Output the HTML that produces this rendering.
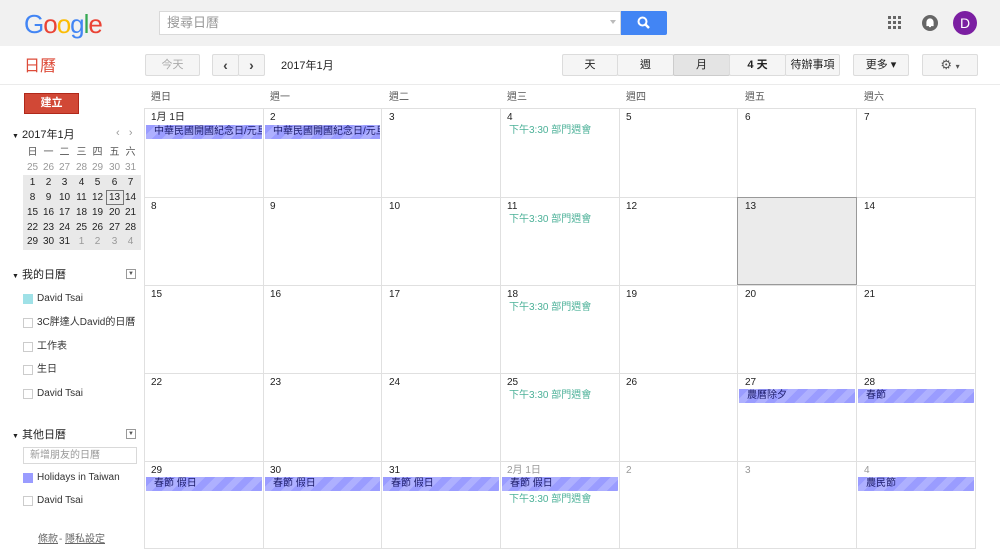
<!DOCTYPE html>
<html><head><meta charset="utf-8"><style>
*{box-sizing:border-box;margin:0;padding:0;line-height:12px}
body{width:1000px;height:549px;overflow:hidden;background:#fff;font-family:"Liberation Sans","Noto Sans CJK TC",sans-serif;font-size:11px;color:#222;position:relative}
.a{position:absolute}
.hdr{left:0;top:0;width:1000px;height:46px;background:#f1f1f1}
.btn{position:absolute;border:1px solid #dcdcdc;background:#f5f5f5;border-radius:2px;text-align:center;font-size:11px;line-height:20px;color:#444}
.vl{position:absolute;top:108px;width:1px;height:441px;background:#e0e0e0}
.hl{position:absolute;left:144px;width:832px;height:1px;background:#e0e0e0}
.dn{position:absolute;font-size:10px;color:#222}
.dh{position:absolute;top:92px;font-size:10px;color:#555}
.ev{position:absolute;height:14px;font-size:10px;line-height:14px;padding-left:8px;color:#1d1d6a;background:repeating-linear-gradient(135deg,#9a9cff 0 7px,#aeb0ff 7px 14px);white-space:nowrap;overflow:hidden}
.tm{position:absolute;font-size:10px;color:#4cb198}
.mc span{position:absolute;width:17px;text-align:center;font-size:10px}
.cb{position:absolute;left:23px;width:10px;height:10px;border:1px solid #ccc}
.cl{position:absolute;left:37px;font-size:10px;color:#333}
</style></head><body>
<div class="a hdr"></div>
<div class="a" style="left:24px;top:10px;font-size:26px;line-height:28px;letter-spacing:-1px;font-family:'Liberation Sans',sans-serif"><span style="color:#4285f4;line-height:28px">G</span><span style="color:#ea4335;line-height:28px">o</span><span style="color:#fbbc05;line-height:28px">o</span><span style="color:#4285f4;line-height:28px">g</span><span style="color:#34a853;line-height:28px">l</span><span style="color:#ea4335;line-height:28px">e</span></div>
<div class="a" style="left:159px;top:11px;width:462px;height:24px;background:#fff;border:1px solid #d9d9d9"></div>
<div class="a" style="left:167px;top:15px;font-size:13px;line-height:15px;color:#999">搜尋日曆</div>
<div class="a" style="left:610px;top:20px;border:3px solid transparent;border-top:4px solid #bbb"></div>
<div class="a" style="left:621px;top:11px;width:46px;height:24px;background:#4285f4;border-radius:0 2px 2px 0"></div>
<svg class="a" style="left:636px;top:15px" width="16" height="16" viewBox="0 0 16 16"><circle cx="6.5" cy="6.5" r="4" fill="none" stroke="#fff" stroke-width="2"/><path d="M9.5 9.5L13 13" stroke="#fff" stroke-width="2.5"/></svg>
<svg class="a" style="left:888px;top:16px" width="14" height="14"><g fill="#666"><rect x="0" y="0" width="3" height="3"/><rect x="5" y="0" width="3" height="3"/><rect x="10" y="0" width="3" height="3"/><rect x="0" y="5" width="3" height="3"/><rect x="5" y="5" width="3" height="3"/><rect x="10" y="5" width="3" height="3"/><rect x="0" y="10" width="3" height="3"/><rect x="5" y="10" width="3" height="3"/><rect x="10" y="10" width="3" height="3"/></g></svg>
<svg class="a" style="left:921px;top:14px" width="18" height="18"><circle cx="9" cy="9" r="8" fill="#666"/><path d="M6 11.5V8a3 3 0 0 1 6 0v3.5zM8 12.5h2" stroke="#fff" stroke-width="1.2" fill="#fff"/></svg>
<div class="a" style="left:953px;top:11px;width:24px;height:24px;border-radius:50%;background:#7b1fa2;color:#fff;font-size:14px;text-align:center;line-height:24px">D</div>

<div class="a" style="left:24px;top:58px;font-size:16px;line-height:18px;color:#dd4b39">日曆</div>
<div class="btn" style="left:145px;top:54px;width:55px;height:22px;color:#aaa">今天</div>
<div class="btn" style="left:212px;top:54px;width:27px;height:22px;font-size:14px;font-weight:bold">‹</div>
<div class="btn" style="left:238px;top:54px;width:27px;height:22px;font-size:14px;font-weight:bold">›</div>
<div class="a" style="left:281px;top:60px;font-size:11px">2017年1月</div>
<div class="btn" style="left:562px;top:54px;width:56px;height:22px;color:#222">天</div>
<div class="btn" style="left:617px;top:54px;width:57px;height:22px;color:#222">週</div>
<div class="btn" style="left:673px;top:54px;width:57px;height:22px;color:#222;background:#e4e4e4;border-color:#ccc">月</div>
<div class="btn" style="left:729px;top:54px;width:57px;height:22px;color:#222;font-weight:bold">4 天</div>
<div class="btn" style="left:785px;top:54px;width:55px;height:22px;color:#222">待辦事項</div>
<div class="btn" style="left:853px;top:54px;width:56px;height:22px;color:#222">更多 ▾</div>
<div class="btn" style="left:922px;top:54px;width:56px;height:22px;color:#555;font-size:13px">⚙ <span style="font-size:8px;line-height:20px">▾</span></div>
<div class="a" style="left:0;top:84px;width:1000px;height:1px;background:#ebebeb"></div>

<div class="a" style="left:24px;top:93px;width:55px;height:21px;background:#d14836;border:1px solid #b0281a;color:#fff;font-weight:bold;text-align:center;line-height:19px;font-size:11px">建立</div>

<div class="a" style="left:12px;top:129px;font-size:11px"><span style="font-size:7px">▼</span> 2017年1月</div>
<div class="a" style="left:116px;top:127px;font-size:11px;color:#999">‹ &nbsp; ›</div>
<div class="a" style="left:23px;top:175px;width:118px;height:75px;background:#e9e9e9"></div>
<div class="a" style="left:106px;top:190px;width:18px;height:15px;border:1px solid #777"></div>
<div class="a mc" style="left:0;top:0">
<span style="left:24px;top:147px;color:#555">日</span><span style="left:40px;top:147px;color:#555">一</span><span style="left:56px;top:147px;color:#555">二</span><span style="left:73px;top:147px;color:#555">三</span><span style="left:89px;top:147px;color:#555">四</span><span style="left:106px;top:147px;color:#555">五</span><span style="left:122px;top:147px;color:#555">六</span>
<span style="left:24px;top:162px;color:#999">25</span><span style="left:40px;top:162px;color:#999">26</span><span style="left:56px;top:162px;color:#999">27</span><span style="left:73px;top:162px;color:#999">28</span><span style="left:89px;top:162px;color:#999">29</span><span style="left:106px;top:162px;color:#999">30</span><span style="left:122px;top:162px;color:#999">31</span>
<span style="left:24px;top:177px">1</span><span style="left:40px;top:177px">2</span><span style="left:56px;top:177px">3</span><span style="left:73px;top:177px">4</span><span style="left:89px;top:177px">5</span><span style="left:106px;top:177px">6</span><span style="left:122px;top:177px">7</span>
<span style="left:24px;top:192px">8</span><span style="left:40px;top:192px">9</span><span style="left:56px;top:192px">10</span><span style="left:73px;top:192px">11</span><span style="left:89px;top:192px">12</span><span style="left:106px;top:192px">13</span><span style="left:122px;top:192px">14</span>
<span style="left:24px;top:207px">15</span><span style="left:40px;top:207px">16</span><span style="left:56px;top:207px">17</span><span style="left:73px;top:207px">18</span><span style="left:89px;top:207px">19</span><span style="left:106px;top:207px">20</span><span style="left:122px;top:207px">21</span>
<span style="left:24px;top:222px">22</span><span style="left:40px;top:222px">23</span><span style="left:56px;top:222px">24</span><span style="left:73px;top:222px">25</span><span style="left:89px;top:222px">26</span><span style="left:106px;top:222px">27</span><span style="left:122px;top:222px">28</span>
<span style="left:24px;top:236px">29</span><span style="left:40px;top:236px">30</span><span style="left:56px;top:236px">31</span><span style="left:73px;top:236px;color:#999">1</span><span style="left:89px;top:236px;color:#999">2</span><span style="left:106px;top:236px;color:#999">3</span><span style="left:122px;top:236px;color:#999">4</span>
</div>

<div class="a" style="left:12px;top:269px;font-size:11px"><span style="font-size:7px">▼</span> 我的日曆</div>
<div class="a" style="left:126px;top:269px;width:10px;height:10px;border:1px solid #999;font-size:6px;line-height:8px;text-align:center;color:#555">▼</div>
<div class="cb" style="top:294px;background:#9fe1e7;border-color:#9fe1e7"></div><div class="cl" style="top:293px">David Tsai</div>
<div class="cb" style="top:318px"></div><div class="cl" style="top:317px">3C胖達人David的日曆</div>
<div class="cb" style="top:342px"></div><div class="cl" style="top:341px">工作表</div>
<div class="cb" style="top:365px"></div><div class="cl" style="top:364px">生日</div>
<div class="cb" style="top:389px"></div><div class="cl" style="top:388px">David Tsai</div>
<div class="a" style="left:12px;top:429px;font-size:11px"><span style="font-size:7px">▼</span> 其他日曆</div>
<div class="a" style="left:126px;top:429px;width:10px;height:10px;border:1px solid #999;font-size:6px;line-height:8px;text-align:center;color:#555">▼</div>
<div class="a" style="left:23px;top:447px;width:114px;height:17px;border:1px solid #d9d9d9;font-size:10px;color:#999;padding-left:6px;line-height:15px">新增朋友的日曆</div>
<div class="cb" style="top:473px;background:#9a9cff;border-color:#9a9cff"></div><div class="cl" style="top:472px">Holidays in Taiwan</div>
<div class="cb" style="top:496px"></div><div class="cl" style="top:495px">David Tsai</div>
<div class="a" style="left:38px;top:534px;font-size:10px;color:#666;text-decoration:underline">條款</div><div class="a" style="left:59px;top:534px;font-size:10px;color:#666">-</div><div class="a" style="left:65px;top:534px;font-size:10px;color:#666;text-decoration:underline">隱私設定</div>

<div class="dh" style="left:151px">週日</div><div class="dh" style="left:270px">週一</div><div class="dh" style="left:389px">週二</div><div class="dh" style="left:507px">週三</div><div class="dh" style="left:626px">週四</div><div class="dh" style="left:745px">週五</div><div class="dh" style="left:864px">週六</div>

<div class="a" style="left:737px;top:197px;width:120px;height:88px;background:#ebebeb;border:1px solid #999"></div>

<div class="vl" style="left:144px"></div><div class="vl" style="left:263px"></div><div class="vl" style="left:381px"></div><div class="vl" style="left:500px"></div><div class="vl" style="left:619px"></div><div class="vl" style="left:737px"></div><div class="vl" style="left:856px"></div><div class="vl" style="left:975px"></div>
<div class="hl" style="top:108px"></div><div class="hl" style="top:197px"></div><div class="hl" style="top:285px"></div><div class="hl" style="top:373px"></div><div class="hl" style="top:461px"></div><div class="hl" style="top:548px"></div>
<div class="a" style="left:737px;top:197px;width:120px;height:88px;border:1px solid #999"></div>

<div class="dn" style="left:151px;top:112px">1月 1日</div><div class="dn" style="left:270px;top:112px">2</div><div class="dn" style="left:389px;top:112px">3</div><div class="dn" style="left:507px;top:112px">4</div><div class="dn" style="left:626px;top:112px">5</div><div class="dn" style="left:745px;top:112px">6</div><div class="dn" style="left:864px;top:112px">7</div>
<div class="dn" style="left:151px;top:201px">8</div><div class="dn" style="left:270px;top:201px">9</div><div class="dn" style="left:389px;top:201px">10</div><div class="dn" style="left:507px;top:201px">11</div><div class="dn" style="left:626px;top:201px">12</div><div class="dn" style="left:745px;top:201px">13</div><div class="dn" style="left:864px;top:201px">14</div>
<div class="dn" style="left:151px;top:289px">15</div><div class="dn" style="left:270px;top:289px">16</div><div class="dn" style="left:389px;top:289px">17</div><div class="dn" style="left:507px;top:289px">18</div><div class="dn" style="left:626px;top:289px">19</div><div class="dn" style="left:745px;top:289px">20</div><div class="dn" style="left:864px;top:289px">21</div>
<div class="dn" style="left:151px;top:377px">22</div><div class="dn" style="left:270px;top:377px">23</div><div class="dn" style="left:389px;top:377px">24</div><div class="dn" style="left:507px;top:377px">25</div><div class="dn" style="left:626px;top:377px">26</div><div class="dn" style="left:745px;top:377px">27</div><div class="dn" style="left:864px;top:377px">28</div>
<div class="dn" style="left:151px;top:465px">29</div><div class="dn" style="left:270px;top:465px">30</div><div class="dn" style="left:389px;top:465px">31</div><div class="dn" style="left:507px;top:465px;color:#999">2月 1日</div><div class="dn" style="left:626px;top:465px;color:#999">2</div><div class="dn" style="left:745px;top:465px;color:#999">3</div><div class="dn" style="left:864px;top:465px;color:#999">4</div>

<div class="ev" style="left:146px;top:125px;width:116px">中華民國開國紀念日/元旦</div>
<div class="ev" style="left:265px;top:125px;width:115px">中華民國開國紀念日/元旦</div>
<div class="tm" style="left:509px;top:125px">下午3:30 部門週會</div>
<div class="tm" style="left:509px;top:214px">下午3:30 部門週會</div>
<div class="tm" style="left:509px;top:302px">下午3:30 部門週會</div>
<div class="tm" style="left:509px;top:390px">下午3:30 部門週會</div>
<div class="ev" style="left:739px;top:389px;width:116px">農曆除夕</div>
<div class="ev" style="left:858px;top:389px;width:116px">春節</div>
<div class="ev" style="left:146px;top:477px;width:116px">春節 假日</div>
<div class="ev" style="left:265px;top:477px;width:115px">春節 假日</div>
<div class="ev" style="left:383px;top:477px;width:116px">春節 假日</div>
<div class="ev" style="left:502px;top:477px;width:116px">春節 假日</div>
<div class="tm" style="left:509px;top:494px">下午3:30 部門週會</div>
<div class="ev" style="left:858px;top:477px;width:116px">農民節</div>
</body></html>
